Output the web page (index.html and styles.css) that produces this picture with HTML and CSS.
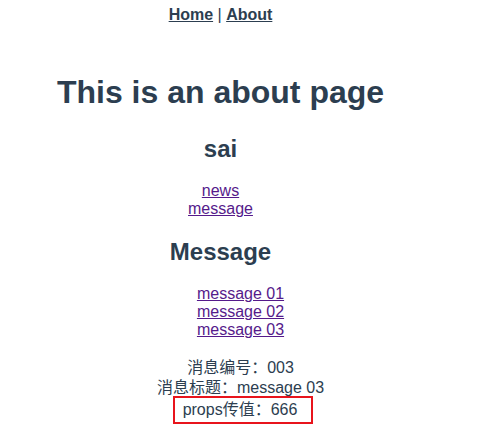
FILE: index.html
```html
<!DOCTYPE html>
<html lang="zh">
<head>
<meta charset="utf-8">
<link rel="stylesheet" href="styles.css">
</head>
<body>
<div class="app">
  <div class="nav"><a href="#/">Home</a> | <a href="#/about">About</a></div>
  <div class="about">
    <h1 class="title">This is an about page</h1>
    <h2 class="sub">sai</h2>
    <div class="tabs">
      <a class="visited" href="#/about/news">news</a><br>
      <a class="visited" href="#/about/message">message</a>
    </div>
    <h2 class="sub">Message</h2>
    <ul class="msg-list">
      <li><a class="visited" href="#1">message 01</a></li>
      <li><a class="visited" href="#2">message 02</a></li>
      <li><a class="visited" href="#3">message 03</a></li>
    </ul>
    <ul class="detail">
      <li>消息编号：003</li>
      <li>消息标题：message 03</li>
      <li><span class="props">props传值：666</span></li>
    </ul>
  </div>
</div>
</body>
</html>
```
FILE: styles.css
```css
html, body {
  margin: 0;
  padding: 0;
  background: #ffffff;
}
.app {
  width: 441px;
  font-family: "Liberation Sans", Arial, "Noto Sans CJK SC", sans-serif;
  text-align: center;
  color: #2c3e50;
  font-size: 16px;
  line-height: 18px;
}
.nav {
  padding-top: 6px;
}
.nav a {
  font-weight: bold;
  color: #2c3e50;
}
.title {
  font-size: 32px;
  line-height: 37px;
  margin: 50px 0 24px;
}
.sub {
  font-size: 24px;
  line-height: 28px;
  margin: 20px 0 19px;
}
.visited {
  color: #551a8b;
}
.msg-list {
  list-style: none;
  margin: 16px 0;
  padding-left: 40px;
}
.detail {
  list-style: none;
  margin: 19px 0 0;
  padding-left: 40px;
}
.detail li {
  line-height: 20px;
}
.props {
  display: inline-block;
  border: 2px solid #e8141c;
  padding: 2px 14px 2px 8px;
  margin: -2px 0 0 5px;
}
```
